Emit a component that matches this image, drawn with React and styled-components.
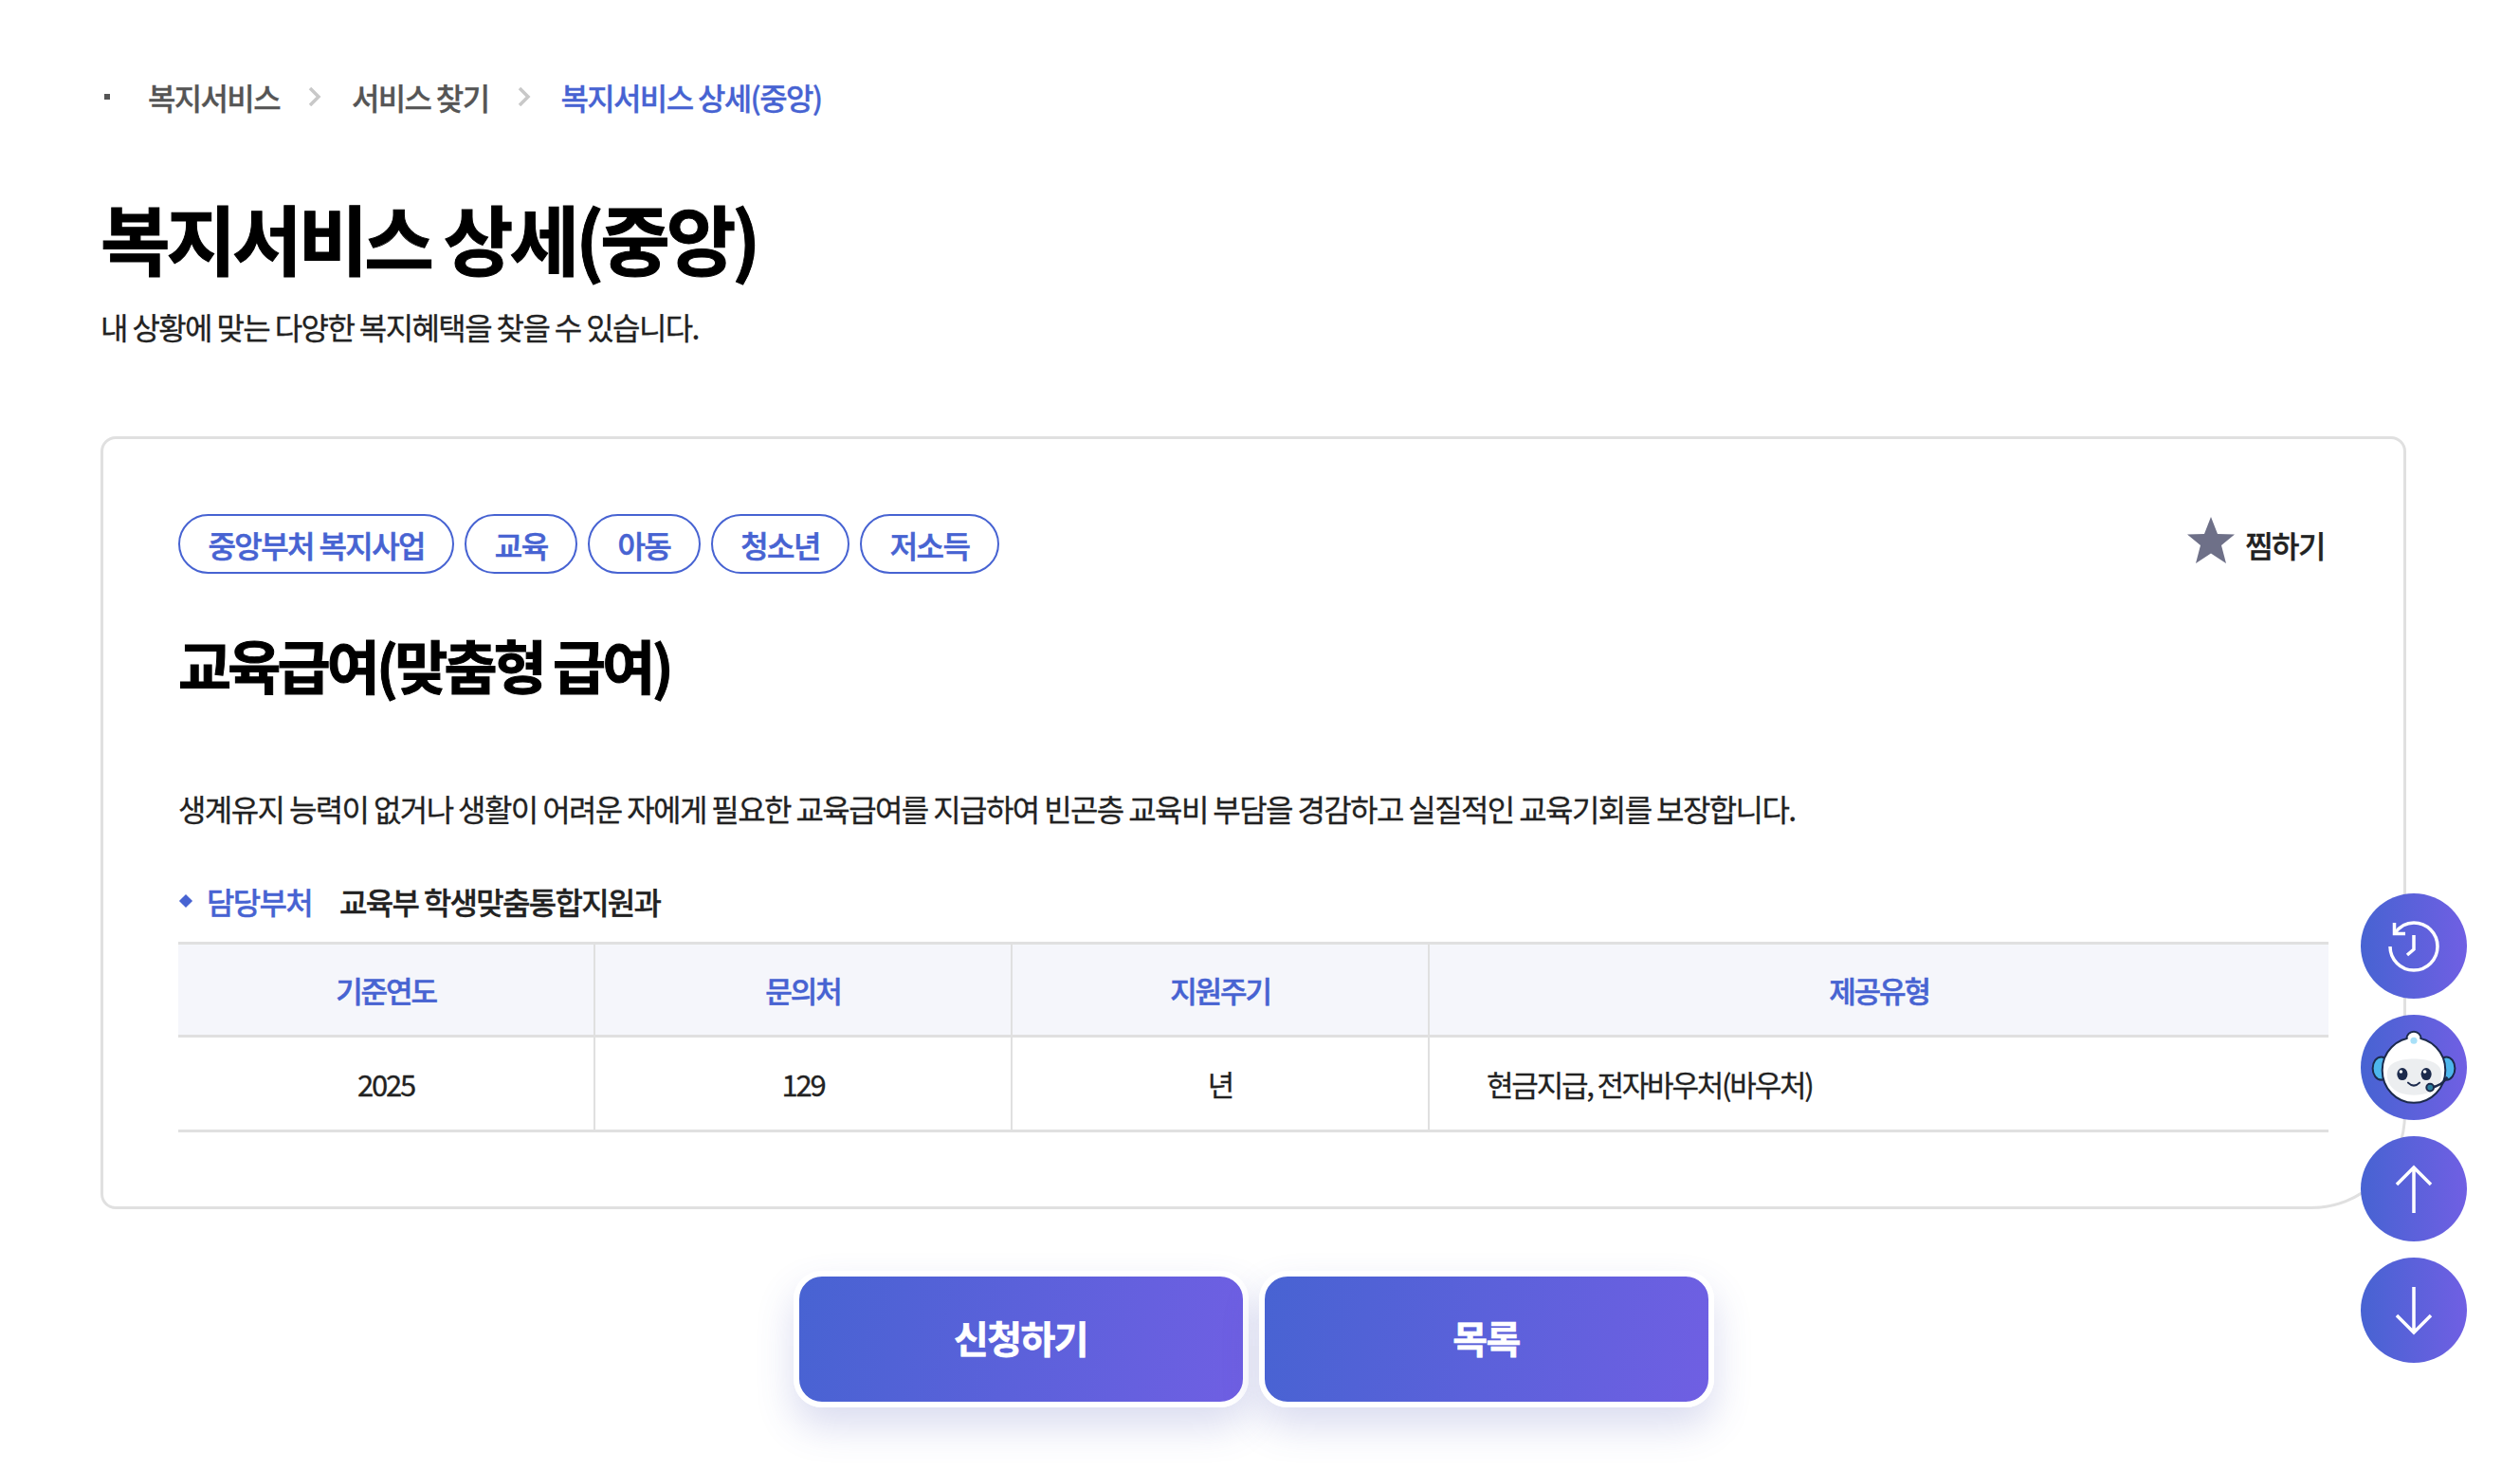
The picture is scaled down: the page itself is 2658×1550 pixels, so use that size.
import React from "react";
import styled, { createGlobalStyle } from "styled-components";

const GlobalStyle = createGlobalStyle`
  * {
    box-sizing: border-box;
  }
  html, body {
    margin: 0;
    padding: 0;
    background: #fff;
  }
  body {
    font-family: "Noto Sans CJK KR", "Noto Sans", sans-serif;
    color: #222;
    -webkit-text-stroke: 0.3px;
  }
`;

const blue = "#4763d2";
const gradient = "linear-gradient(100deg, #4763d2, #705fe3)";

const Page = styled.div`
  padding: 80px 120px 66px 106px;
`;

const Breadcrumb = styled.nav`
  display: flex;
  align-items: center;
  height: 44px;
  font-size: 32px;
  font-weight: 500;
  letter-spacing: -1.65px;
  color: #555;
`;

const Bullet = styled.span`
  width: 6px;
  height: 6px;
  margin: 0 40px 0 4px;
  background: #555;
`;

const Crumb = styled.span`
  color: ${(props) => (props.$active ? blue : "#555")};
`;

const Chevron = styled.svg`
  width: 14px;
  height: 20px;
  margin: 0 31.5px 0 30.5px;
`;

const Title = styled.h1`
  margin: 75px 0 0;
  font-size: 80px;
  line-height: 100px;
  font-weight: 700;
  letter-spacing: -4.05px;
  color: #000;
  -webkit-text-stroke: 1px;
`;

const Subtitle = styled.p`
  margin: 23px 0 0;
  font-size: 32px;
  line-height: 44px;
  letter-spacing: -1.6px;
`;

const Card = styled.section`
  margin-top: 94px;
  height: 815px;
  padding: 79px 79px 0;
  background: #fff;
  border: 3px solid #e0e0e0;
  border-radius: 16px 16px 100px 16px;
`;

const CardTop = styled.div`
  display: flex;
  justify-content: space-between;
  align-items: center;
`;

const Tags = styled.div`
  display: flex;
  gap: 11px;
`;

const Tag = styled.span`
  height: 63px;
  padding: 0 29.5px;
  display: flex;
  align-items: center;
  border: 2.5px solid ${blue};
  border-radius: 32px;
  font-size: 32px;
  font-weight: 500;
  letter-spacing: -1.6px;
  color: ${blue};
  -webkit-text-stroke: 0.6px;
`;

const Favorite = styled.div`
  display: flex;
  align-items: center;
  gap: 10px;
  margin-right: 4px;
  font-size: 32px;
  font-weight: 500;
  letter-spacing: -1.5px;
`;

const StarIcon = styled.svg`
  width: 52px;
  height: 52px;
  margin-top: -7px;
`;

const ServiceName = styled.h2`
  margin: 56px 0 0;
  font-size: 61px;
  line-height: 80px;
  font-weight: 700;
  letter-spacing: -3.85px;
  color: #000;
  -webkit-text-stroke: 1px;
`;

const Description = styled.p`
  margin: 89px 0 0;
  font-size: 32px;
  line-height: 44px;
  letter-spacing: -1.6px;
`;

const DeptRow = styled.div`
  display: flex;
  align-items: center;
  margin-top: 54px;
  height: 44px;
  font-size: 32px;
  letter-spacing: -1.7px;
`;

const Diamond = styled.span`
  width: 10px;
  height: 10px;
  margin: 0 17px 0 3px;
  background: ${blue};
  transform: rotate(45deg);
`;

const DeptLabel = styled.span`
  margin-right: 29px;
  font-weight: 500;
  color: ${blue};
`;

const DeptName = styled.span`
  font-weight: 500;
`;

const Table = styled.table`
  width: 100%;
  margin-top: 21px;
  table-layout: fixed;
  border-collapse: collapse;
  border-top: 3px solid #e0e0e0;
  border-bottom: 3px solid #e0e0e0;
`;

const HeadCell = styled.th`
  height: 98px;
  padding: 0;
  background: #f5f6fb;
  border-bottom: 3px solid #e0e0e0;
  border-left: 2px solid #e0e0e0;
  font-size: 31px;
  font-weight: 500;
  letter-spacing: -2.1px;
  color: ${blue};
  -webkit-text-stroke: 0.5px;
  &:first-child {
    border-left: 0;
  }
`;

const BodyCell = styled.td`
  height: 100px;
  padding: 0 ${(props) => (props.$left ? "60px" : "0")};
  border-left: 2px solid #e0e0e0;
  text-align: ${(props) => (props.$left ? "left" : "center")};
  font-size: 31px;
  letter-spacing: -2.2px;
  &:first-child {
    border-left: 0;
  }
`;

const Actions = styled.div`
  display: flex;
  justify-content: center;
  gap: 11px;
  margin-top: 65px;
`;

const ActionButton = styled.button`
  width: 480px;
  height: 144px;
  padding: 0 0 4px;
  border: 6px solid #fff;
  border-radius: 30px;
  background: ${gradient};
  background-origin: border-box;
  box-shadow: 0 20px 40px rgba(71, 80, 180, 0.2);
  font-family: inherit;
  font-size: 40px;
  font-weight: 700;
  letter-spacing: -1.6px;
  color: #fff;
  -webkit-text-stroke: 0.6px;
`;

const FloatMenu = styled.div`
  position: fixed;
  top: 942px;
  right: 56px;
  display: flex;
  flex-direction: column;
  gap: 17px;
`;

const FloatButton = styled.button`
  width: 112px;
  height: 111px;
  padding: 0;
  display: flex;
  align-items: center;
  justify-content: center;
  border: 0;
  border-radius: 50%;
  background: linear-gradient(90deg, #4763d2, #705fe3);
`;

const HistoryIcon = () => (
  <svg width="60" height="60" viewBox="0 0 60 60" fill="none" stroke="#fff" strokeWidth="3.5">
    <path d="M5 30A25 25 0 1 0 30 5C22 5 15 9 10 16" />
    <path d="M9.500 5V16.500H21" />
    <path d="M30 18V33L23 39" />
  </svg>
);

const UpIcon = () => (
  <svg width="60" height="60" viewBox="0 0 60 60" fill="none" stroke="#fff" strokeWidth="3.5">
    <path d="M30 6V55M12 25L30 7L48 25" />
  </svg>
);

const DownIcon = () => (
  <svg width="60" height="60" viewBox="0 0 60 60" fill="none" stroke="#fff" strokeWidth="3.5">
    <path d="M30 5V54M12 35L30 53L48 35" />
  </svg>
);

const Mascot = () => (
  <svg width="112" height="111" viewBox="0 0 110 110">
    <ellipse cx="21" cy="56" rx="9" ry="12" fill="#4db6ec" stroke="#1c2a4c" strokeWidth="2" />
    <ellipse cx="89" cy="56" rx="9" ry="12" fill="#4db6ec" stroke="#1c2a4c" strokeWidth="2" />
    <circle cx="55" cy="25" r="7.500" fill="#fff" stroke="#1c2a4c" strokeWidth="2" />
    <ellipse cx="55" cy="58" rx="33" ry="34" fill="#fff" stroke="#1c2a4c" strokeWidth="2" />
    <ellipse cx="55" cy="26" rx="6.500" ry="6" fill="#fff" />
    <circle cx="55" cy="27" r="3.500" fill="#a8e0f8" />
    <path d="M27 62C27 50 40 46 55 46C70 46 84 50 84 62C84 76 72 84 55 84C38 84 27 76 27 62Z" fill="#eceef0" />
    <ellipse cx="43" cy="62" rx="5.500" ry="6.500" fill="#1c2a4c" />
    <ellipse cx="68" cy="62" rx="5.500" ry="6.500" fill="#1c2a4c" />
    <circle cx="41.500" cy="59.500" r="1.800" fill="#fff" />
    <circle cx="66.500" cy="59.500" r="1.800" fill="#fff" />
    <path d="M49 71Q55 77 61 71" fill="none" stroke="#1c2a4c" strokeWidth="2" strokeLinecap="round" />
    <path d="M72 76Q84 75 90 65" fill="none" stroke="#1c2a4c" strokeWidth="2.500" />
    <circle cx="72" cy="76" r="3.800" fill="#2b7f9e" stroke="#1c2a4c" strokeWidth="2" />
  </svg>
);

const BreadcrumbArrow = () => (
  <Chevron viewBox="0 0 14 20" fill="none" stroke="#c8c8c8" strokeWidth="3.5">
    <path d="M2 1L11 10L2 19" />
  </Chevron>
);

const tags = ["중앙부처 복지사업", "교육", "아동", "청소년", "저소득"];
const heads = ["기준연도", "문의처", "지원주기", "제공유형"];

const App = () => {
  return (
    <Page>
      <GlobalStyle />
      <Breadcrumb>
        <Bullet />
        <Crumb>복지서비스</Crumb>
        <BreadcrumbArrow />
        <Crumb>서비스 찾기</Crumb>
        <BreadcrumbArrow />
        <Crumb $active>복지서비스 상세(중앙)</Crumb>
      </Breadcrumb>
      <Title>복지서비스 상세(중앙)</Title>
      <Subtitle>내 상황에 맞는 다양한 복지혜택을 찾을 수 있습니다.</Subtitle>
      <Card>
        <CardTop>
          <Tags>
            {tags.map((tag) => (
              <Tag key={tag}>{tag}</Tag>
            ))}
          </Tags>
          <Favorite>
            <StarIcon viewBox="0 0 52 52">
              <path d="M26 1L33 19L51 19.500L37 31L42 50L26 39.500L10 50L15 31L1 19.500L19 19Z" fill="#6e7088" />
            </StarIcon>
            찜하기
          </Favorite>
        </CardTop>
        <ServiceName>교육급여(맞춤형 급여)</ServiceName>
        <Description>
          생계유지 능력이 없거나 생활이 어려운 자에게 필요한 교육급여를 지급하여 빈곤층 교육비 부담을 경감하고 실질적인 교육기회를 보장합니다.
        </Description>
        <DeptRow>
          <Diamond />
          <DeptLabel>담당부처</DeptLabel>
          <DeptName>교육부 학생맞춤통합지원과</DeptName>
        </DeptRow>
        <Table>
          <colgroup>
            <col width="439" />
            <col width="440" />
            <col width="440" />
            <col />
          </colgroup>
          <thead>
            <tr>
              {heads.map((head) => (
                <HeadCell key={head}>{head}</HeadCell>
              ))}
            </tr>
          </thead>
          <tbody>
            <tr>
              <BodyCell>2025</BodyCell>
              <BodyCell>129</BodyCell>
              <BodyCell>년</BodyCell>
              <BodyCell $left>현금지급, 전자바우처(바우처)</BodyCell>
            </tr>
          </tbody>
        </Table>
      </Card>
      <Actions>
        <ActionButton>신청하기</ActionButton>
        <ActionButton>목록</ActionButton>
      </Actions>
      <FloatMenu>
        <FloatButton><HistoryIcon /></FloatButton>
        <FloatButton><Mascot /></FloatButton>
        <FloatButton><UpIcon /></FloatButton>
        <FloatButton><DownIcon /></FloatButton>
      </FloatMenu>
    </Page>
  );
};

export default App;
